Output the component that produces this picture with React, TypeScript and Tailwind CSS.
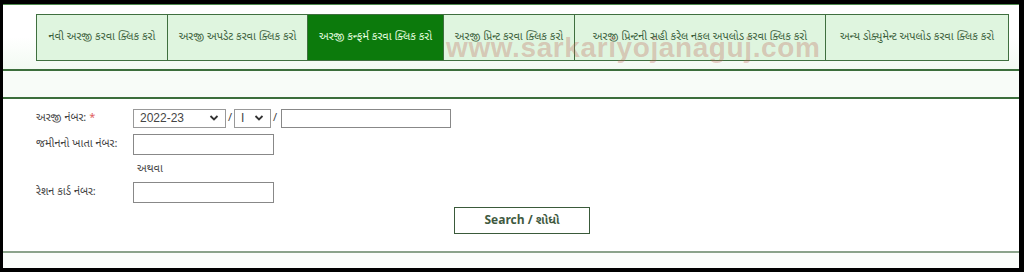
import React from "react";

const tabs = [
  { label: "નવી અરજી કરવા ક્લિક કરો", w: "w-[130px]" },
  { label: "અરજી અપડેટ કરવા ક્લિક કરો", w: "w-[140px]" },
  { label: "અરજી કન્ફર્મ કરવા ક્લિક કરો", w: "w-[136px]", active: true },
  { label: "અરજી પ્રિન્ટ કરવા ક્લિક કરો", w: "w-[131px]" },
  { label: "અરજી પ્રિન્ટની સહી કરેલ નકલ અપલોડ કરવા ક્લિક કરો", w: "w-[251px]" },
  { label: "અન્ય ડોક્યુમેન્ટ અપલોડ કરવા ક્લિક કરો", w: "w-[183px]" },
];

const font = { fontFamily: '"Noto Sans Gujarati", "Noto Sans", "DejaVu Sans", sans-serif' };
const arial = { fontFamily: '"Liberation Sans", Arial, sans-serif' };

export default function App() {
  return (
    <div
      className="relative w-[1024px] h-[272px] bg-white border-l-[3px] border-r-[5px] border-t-4 border-b-4 border-black overflow-hidden text-[#333]"
      style={font}
    >
      {/* top thin line */}
      <div className="h-px bg-[#4f8a4f]" />

      {/* tabs */}
      <div className="h-[64px] pt-[9px] pl-[33px] bg-gradient-to-b from-white via-white to-[#f2faf2]">
        <div className="flex w-fit h-[47px] border border-[#3f6f3f]">
          {tabs.map((t, i) => (
            <div
              key={i}
              className={`${t.w} flex items-center justify-center text-[11px] ${
                i > 0 ? "border-l border-[#3f6f3f]" : ""
              } ${t.active ? "bg-[#0c7a0c] text-[#e8ffe0]" : "bg-[#dff5df] text-[#3b5f3b]"}`}
            >
              {t.label}
            </div>
          ))}
        </div>
      </div>

      {/* watermark */}
      <div
        className="absolute left-[443px] top-[23px] text-[28px] font-bold tracking-[0.6px] text-[rgba(190,90,80,0.3)] pointer-events-none"
        style={arial}
      >
        www.sarkariyojanaguj.com
      </div>

      <div className="h-[2px] bg-[#3c6e3c]" />
      <div className="h-[26px] bg-[#f8fcf8]" />
      <div className="h-[2px] bg-[#3c6e3c]" />

      {/* form */}
      <div className="pl-[33px] pt-[8px] text-[11px] text-[#444]">
        <div className="flex items-center h-[22px]">
          <div className="w-[97px]">
            અરજી નંબર: <span className="text-[#e06060]">*</span>
          </div>
          <div className="flex items-center gap-[2px]">
            <div
              className="w-[93px] h-[19px] border border-[#999] flex items-center justify-between px-[6px] text-[12px] text-[#444]"
              style={arial}
            >
              <span>2022-23</span>
              <Chevron />
            </div>
            <span>/</span>
            <div
              className="w-[37px] h-[19px] border border-[#999] flex items-center justify-between px-[6px] text-[12px]"
              style={arial}
            >
              <span>I</span>
              <Chevron />
            </div>
            <span>/</span>
            <div className="w-[170px] h-[19px] border border-[#888] ml-[2px]" />
          </div>
        </div>
        <div className="flex items-center h-[26px] mt-[2px]">
          <div className="w-[97px]">જમીનનો ખાતા નંબર:</div>
          <div className="w-[141px] h-[21px] border border-[#888]" />
        </div>
        <div className="h-[24px] flex items-center pl-[101px]">અથવા</div>
        <div className="flex items-center h-[22px]">
          <div className="w-[97px]">રેશન કાર્ડ નંબર:</div>
          <div className="w-[141px] h-[21px] border border-[#888]" />
        </div>
        <div className="flex pl-[418px] mt-[4px]">
          <div className="w-[136px] h-[27px] border border-[#3a5a3a] flex items-center justify-center text-[12px] font-bold text-[#3f5a3f]">
            Search / શોધો
          </div>
        </div>
      </div>

      <div className="absolute left-0 right-0 top-[247px] h-[2px] bg-[#8aa38a]" />
      <div className="absolute left-0 right-0 top-[249px] bottom-0 bg-[#fafdfa]" />
    </div>
  );
}

function Chevron() {
  return (
    <svg width="10" height="8" viewBox="0 0 10 8">
      <path d="M1.5 2 L5 5.5 L8.5 2" fill="none" stroke="#333" strokeWidth="1.8" />
    </svg>
  );
}
